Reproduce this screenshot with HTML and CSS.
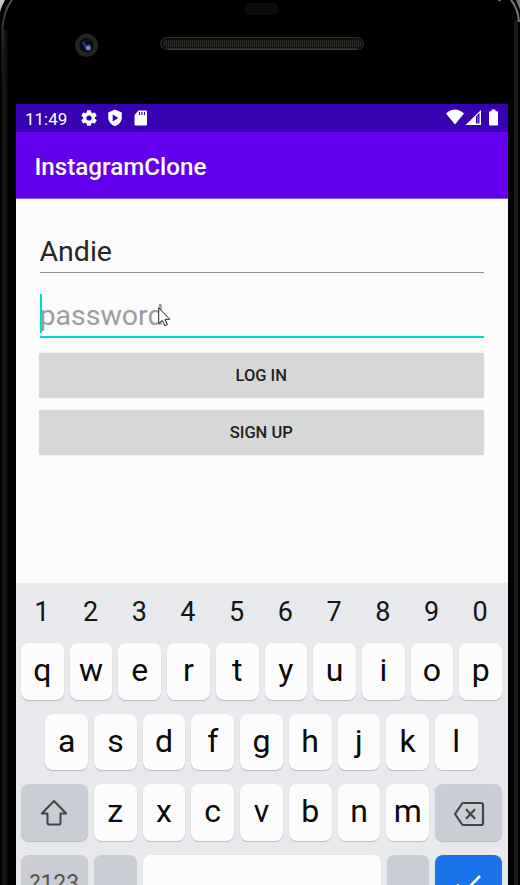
FILE: index.html
```html
<!DOCTYPE html>
<html lang="en">
<head>
<meta charset="utf-8">
<title>InstagramClone</title>
<link rel="stylesheet" href="styles.css">
</head>
<body>
<div class="phone">
  <svg class="shell" width="520" height="885" viewBox="0 0 520 885" aria-hidden="true">
    <defs>
      <linearGradient id="rim" x1="0" x2="1"><stop offset="0" stop-color="#050505"/><stop offset=".45" stop-color="#1a1a1a"/><stop offset="1" stop-color="#050505"/></linearGradient>
      <linearGradient id="shine" x1="0" y1="0" x2="0" y2="1"><stop offset="0" stop-color="#555"/><stop offset=".5" stop-color="#222"/><stop offset="1" stop-color="#111"/></linearGradient>
      <pattern id="mesh" width="2" height="2" patternUnits="userSpaceOnUse"><path d="M.5 0v2" stroke="#2c2b26"/></pattern>
    </defs>
    <path d="M0 0h5Q2 5 0 12z" fill="#c9c3cb"/>
    <path d="M516 0h4v10Q518 5 516 0z" fill="#777"/>
    <path d="M4 30h4v855H1V35z" fill="url(#rim)"/>
    <path d="M514 20h4v865h-4z" fill="#191919"/>
    <path d="M12 0Q4 10 2.500 28V85" fill="none" stroke="url(#shine)" stroke-width="2"/>
    <path d="M511 0Q518 8 519 22" fill="none" stroke="#777" stroke-width="2"/>
    <path d="M498 0l3 1" stroke="#777"/>
    <rect x="244" y="3" width="35" height="12" rx="6" fill="#0b0d0c"/>
    <circle cx="86.500" cy="45.300" r="11.500" fill="#232323"/>
    <circle cx="86.500" cy="45.300" r="7" fill="#090b17"/>
    <path d="M83 42l3 5 4-2" fill="none" stroke="#263678" stroke-width="2.500"/>
    <circle cx="88.300" cy="48" r="2.500" fill="#7181d6"/>
    <rect x="160.500" y="37.500" width="203" height="12" rx="6" fill="#10100f" stroke="#2c2c2c"/>
    <rect x="164" y="40" width="197" height="7" rx="3" fill="url(#mesh)"/>
    <path d="M167 49h190" stroke="#4c4a46"/>
  </svg>
  <main class="screen">
    <header>
      <div class="status">
        <span class="time">11:49</span>
        <svg class="gear" width="18" height="18" viewBox="1 1 22 22"><path fill="#fff" d="M19.140 12.940c.04-.3.060-.610.060-.940 0-.320-.020-.640-.070-.940l2.030-1.580a.49.49 0 0 0 .120-.610l-1.920-3.320a.488.488 0 0 0-.590-.220l-2.390.960c-.5-.380-1.030-.7-1.620-.940l-.360-2.540a.484.484 0 0 0-.480-.410h-3.840c-.240 0-.430.170-.470.410l-.360 2.540c-.590.240-1.130.570-1.620.940l-2.390-.960c-.220-.080-.470 0-.590.220L2.740 8.870c-.120.210-.080.470.120.610l2.030 1.580c-.050.3-.090.630-.090.940s.020.640.070.940l-2.030 1.580a.49.49 0 0 0-.120.610l1.920 3.320c.120.220.370.290.590.220l2.390-.960c.5.380 1.030.7 1.620.940l.360 2.540c.050.240.240.410.480.410h3.840c.240 0 .440-.170.470-.410l.360-2.540c.590-.240 1.130-.560 1.620-.940l2.390.960c.220.080.470 0 .590-.220l1.920-3.320c.120-.220.070-.470-.120-.610l-2.010-1.580zM12 15.200A3.200 3.200 0 1 1 12 8.800a3.200 3.200 0 0 1 0 6.400z"/></svg>
        <svg class="shield" width="16" height="18" viewBox="0 0 16 18"><path fill="#fff" d="M8 .6l6.800 2.800v5.100c0 4-2.600 7.200-6.800 8.800-4.200-1.600-6.800-4.800-6.800-8.800V3.400z"/><path fill="#3700b3" d="M5.700 5.500v7l5.700-3.500z"/></svg>
        <svg class="card" width="13" height="16" viewBox="0 0 13 16"><path fill="#fff" d="M4.500.5H12q1 0 1 1v13q0 1-1 1H1.500q-1 0-1-1V5z"/><path d="M5.500 2v3M8 2v3M10.500 2v3" stroke="#3700b3" stroke-width="1.100"/></svg>
        <svg class="signals" width="54" height="18" viewBox="0 0 54 18"><path fill="#fff" d="M0 4.500Q9-3.300 18 4.500L9 15.500zM19.500 16L35 1v15z"/><path fill="#3700b3" d="M30 7.500l3.500-3.500v10.500H30z"/><path d="M31.800 7v7.500" stroke="#b39be2" stroke-width=".7"/><path fill="#fff" d="M43 3.200q0-1 1-1h1.500V.5h4v1.700H51q1 0 1 1v12.300q0 1-1 1h-7q-1 0-1-1z"/></svg>
      </div>
      <h1>InstagramClone</h1>
    </header>
    <form class="form">
      <div class="field"><span>Andie</span></div>
      <div class="field active"><span class="hint">password</span>
        <svg class="pointer" width="13" height="20" viewBox="0 0 13 20"><path d="M.7.8v15.800l3.600-3.300 2.500 5.500 2.600-1.100-2.400-5.400h4.800z" fill="#fff" stroke="#222"/></svg>
      </div>
      <button type="button">LOG IN</button>
      <button type="button">SIGN UP</button>
    </form>
    <section class="keyboard">
      <div class="numbers"><span>1</span><span>2</span><span>3</span><span>4</span><span>5</span><span>6</span><span>7</span><span>8</span><span>9</span><span>0</span></div>
      <div class="row"><b>q</b><b>w</b><b>e</b><b>r</b><b>t</b><b>y</b><b>u</b><b>i</b><b>o</b><b>p</b></div>
      <div class="row middle"><b>a</b><b>s</b><b>d</b><b>f</b><b>g</b><b>h</b><b>j</b><b>k</b><b>l</b></div>
      <div class="row">
        <b class="wide gray"><svg width="28" height="28" viewBox="0 0 28 28"><path d="M14 2L1.800 14.500h5.700v10q0 1 1 1h11q1 0 1-1v-10h5.700z" fill="none" stroke="#444" stroke-width="2" stroke-linejoin="round"/></svg></b>
        <b>z</b><b>x</b><b>c</b><b>v</b><b>b</b><b>n</b><b>m</b>
        <b class="wide gray erase"><svg width="32" height="26" viewBox="0 0 32 26"><path d="M9.500 2H28q2 0 2 2v18q0 2-2 2H9.500L2 13z" fill="none" stroke="#444" stroke-width="2.200" stroke-linejoin="round"/><path d="M13 8.300l9 9.400m0-9.400l-9 9.400" stroke="#444" stroke-width="2.200"/></svg></b>
      </div>
      <div class="row">
        <b class="wide gray symbols">?123</b><b class="gray"></b><b class="space"></b><b class="gray"></b>
        <b class="wide enter"><svg width="28" height="22" viewBox="0 0 28 22"><path d="M2 10.500l7.500 7.500L25 2" fill="none" stroke="#fff" stroke-width="2.600"/></svg></b>
      </div>
    </section>
  </main>
</div>
</body>
</html>
```
FILE: styles.css
```css
* { box-sizing: border-box; }
body { margin: 0; background: #000; font-family: Roboto, sans-serif; }
.phone { position: relative; width: 520px; height: 885px; padding: 104px 12px 0 16px; overflow: hidden; background: #000; }
.shell { position: absolute; left: 0; top: 0; }
.screen { position: relative; height: 781px; background: #fbfbfb; overflow: hidden; display: flex; flex-direction: column; }
header { height: 95px; flex: none; background: #6200ee; border-bottom: 1px solid #8a62d4; color: #fff; }
.status { height: 28px; background: #3700b3; display: flex; align-items: center; padding: 0 8px 0 9px; }
.time { width: 55px; font-size: 17px; line-height: 28px; padding-top: 1px; }
.shield { margin-left: 9px; }
.card { margin-left: 11px; }
.signals { margin-left: auto; }
h1 { margin: 0; padding-left: 18.500px; font-size: 24.200px; line-height: 70px; font-weight: 500; }
.form { height: 384px; flex: none; padding: 30px 24px 0 22.500px; display: flex; flex-direction: column; }
.field { height: 44px; margin: 0 0 0 1px; border-bottom: 1.500px solid #929292; font-size: 28.500px; line-height: 45px; color: #252525; }
.active { position: relative; height: 44px; margin-top: 20.500px; border-bottom: 2px solid #00dac8; line-height: 43px; }
.active::before { content: ""; position: absolute; left: 0; top: 0; width: 2px; height: 39px; background: #00dac8; }
.hint { color: #9d9d9d; }
.pointer { position: absolute; left: 118.500px; top: 13px; }
button { flex: none; height: 45px; margin: 15px 0 0; padding: 0; border: 0; border-radius: 2px; background: #d6d8d7; box-shadow: 0 0 1px #bfc4c4; color: #222; font: 500 16.500px/45px Roboto, sans-serif; }
button + button { margin-top: 12.500px; }
.keyboard { height: 302px; flex: none; background: #e8e9ed; padding: 0 6px 0 5px; }
.numbers { height: 60px; display: flex; gap: 6px; font-size: 27px; line-height: 58px; color: #151515; margin-left: -.5px; margin-right: .5px; }
.numbers span { flex: 1; text-align: center; }
.row { display: flex; gap: 6px; height: 56.500px; margin-bottom: 14.200px; }
.middle { padding: 0 24.400px; }
.row b { flex: 1 1 0; height: 56.500px; border-radius: 8px; background: #fcfcfc; box-shadow: 0 1px 1px #b9bac3; color: #090909; font-size: 32px; line-height: 55px; font-weight: 400; text-align: center; }
.row .wide { flex: 0 0 66.800px; }
.row .gray { background: #cacdd5; }
.row .wide svg { display: block; margin: 15px auto 0; }
.row .erase svg { margin-top: 17px; }
.row .symbols { color: #555; font-size: 23px; line-height: 58px; }
.row .space { flex: 0 0 238px; }
.row .enter { background: #1a73e8; }
.row .enter svg { margin-top: 19px; }
```
